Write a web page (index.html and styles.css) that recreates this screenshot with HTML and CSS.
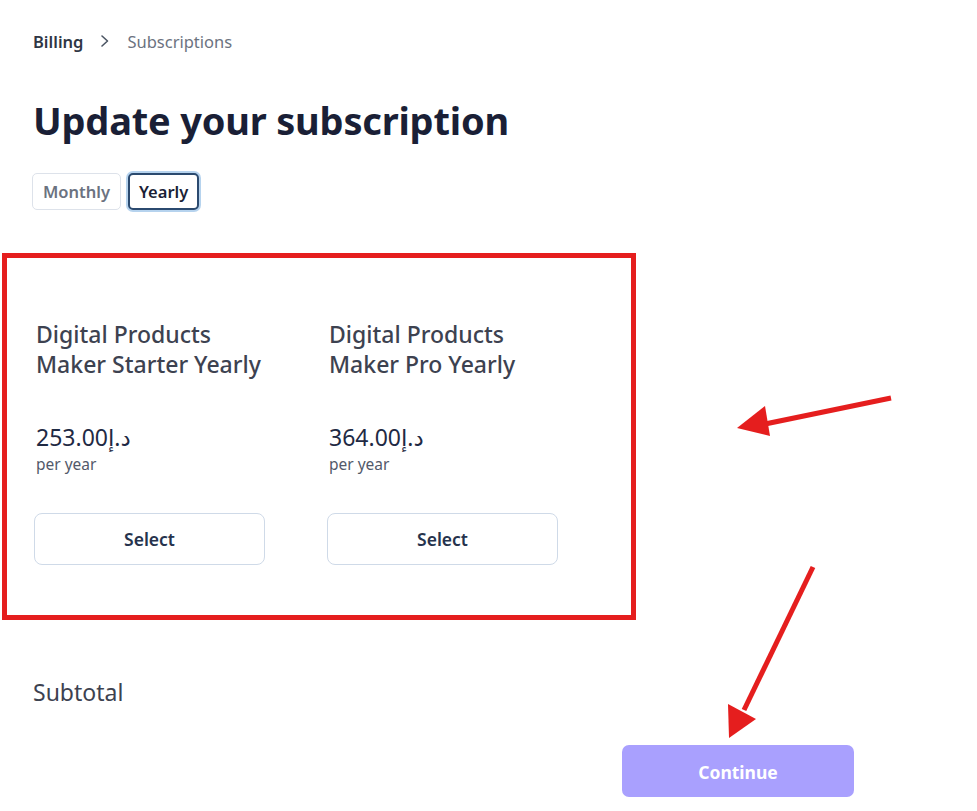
FILE: index.html
```html
<!DOCTYPE html>
<html>
<head>
<meta charset="utf-8">
<link rel="stylesheet" href="styles.css">
</head>
<body>
<div class="page">
  <nav class="crumbs">
    <span class="crumb-main">Billing</span>
    <svg class="chev" width="12" height="14" viewBox="0 0 12 14"><path d="M3 2l5.5 5L3 12" fill="none" stroke="#4b5563" stroke-width="1.6" stroke-linecap="round" stroke-linejoin="round"/></svg>
    <span class="crumb-sub">Subscriptions</span>
  </nav>
  <h1 class="title">Update your subscription</h1>
  <div class="toggle">
    <button class="tog">Monthly</button>
    <button class="tog active">Yearly</button>
  </div>
  <div class="plans">
    <div class="plan">
      <div class="plan-name">Digital Products Maker Starter Yearly</div>
      <div class="price">253.00د.إ</div>
      <div class="per">per year</div>
      <button class="select">Select</button>
    </div>
    <div class="plan">
      <div class="plan-name">Digital Products Maker Pro Yearly</div>
      <div class="price">364.00د.إ</div>
      <div class="per">per year</div>
      <button class="select">Select</button>
    </div>
  </div>
  <div class="subtotal">Subtotal</div>
  <div class="actions">
    <button class="continue">Continue</button>
  </div>
</div>
<svg class="annot" width="977" height="811" viewBox="0 0 977 811">
  <rect x="4.5" y="255.5" width="629" height="362" fill="none" stroke="#e51e1e" stroke-width="5"/>
  <line x1="891" y1="398" x2="760" y2="425" stroke="#e51e1e" stroke-width="5"/>
  <polygon points="737,428 765,406 770,436" fill="#e51e1e"/>
  <line x1="813" y1="567" x2="744" y2="710" stroke="#e51e1e" stroke-width="5"/>
  <polygon points="729,738 728,704 756,719" fill="#e51e1e"/>
</svg>
</body>
</html>
```
FILE: styles.css
```css
html, body {
  margin: 0;
  padding: 0;
  background: #ffffff;
}
body {
  font-family: "Noto Sans", "DejaVu Sans", sans-serif;
  position: relative;
  width: 977px;
  height: 811px;
  overflow: hidden;
}
.page {
  padding: 29px 0 0 33px;
}
.crumbs {
  display: flex;
  align-items: center;
  height: 24px;
  font-size: 16.5px;
}
.crumb-main {
  color: #2f3644;
  font-weight: 600;
}
.chev {
  margin: 0 16px 0 16px;
}
.crumb-sub {
  color: #6b7280;
}
.title {
  margin: 43px 0 0 0;
  font-size: 38px;
  line-height: 48px;
  font-weight: 700;
  color: #1a1f36;
  letter-spacing: -0.2px;
}
.toggle {
  display: flex;
  gap: 7px;
  margin-top: 29px;
  margin-left: -1px;
}
.tog {
  font-family: inherit;
  height: 37px;
  padding: 0 10px;
  font-size: 16.5px;
  font-weight: 600;
  color: #6b7280;
  background: #fff;
  border: 1px solid #dde2ea;
  border-radius: 5px;
}
.tog.active {
  color: #1a1f36;
  border: 2px solid #2b4a6f;
  box-shadow: 0 0 0 2px #b6d3ee;
  padding: 0 9px;
}
.plans {
  display: flex;
  gap: 62px;
  margin-top: 109px;
  margin-left: 1px;
}
.plan {
  width: 231px;
  display: flex;
  flex-direction: column;
}
.plan-name {
  padding-left: 2px;
  font-size: 23px;
  line-height: 30px;
  color: #3d4250;
  font-weight: 500;
  height: 60px;
}
.price {
  padding-left: 2px;
  margin-top: 42px;
  font-size: 23px;
  line-height: 32px;
  color: #1f2a44;
}
.per {
  padding-left: 2px;
  font-size: 15.5px;
  line-height: 22px;
  color: #52596a;
}
.select {
  margin-top: 38px;
  width: 231px;
  height: 52px;
  font-family: inherit;
  font-size: 17.5px;
  font-weight: 600;
  color: #26334d;
  background: #fff;
  border: 1px solid #cfdae8;
  border-radius: 8px;
}
.subtotal {
  margin-top: 112px;
  font-size: 23px;
  line-height: 30px;
  color: #3d4250;
}
.actions {
  display: flex;
  margin-top: 38px;
  padding-left: 589px;
}
.continue {
  width: 232px;
  height: 52px;
  padding-top: 3px;
  font-family: inherit;
  font-size: 17.5px;
  font-weight: 700;
  color: #fff;
  background: #a9a0fe;
  border: none;
  border-radius: 7px;
}
.annot {
  position: absolute;
  left: 0;
  top: 0;
  pointer-events: none;
}
```
